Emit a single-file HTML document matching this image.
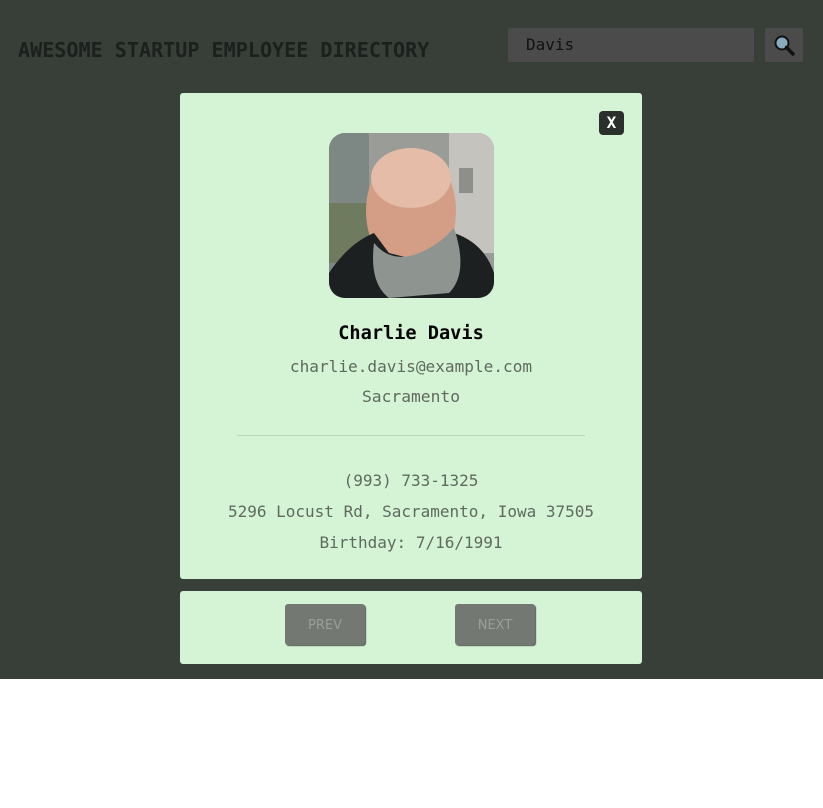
<!DOCTYPE html>
<html><head><style>
body{margin:0;width:823px;height:808px;background:#fff;position:relative;overflow:hidden;font-family:"DejaVu Sans Mono","Liberation Mono",monospace}
.bg{position:absolute;left:0;top:0;width:823px;height:679px;background:#373f38}
.title{position:absolute;left:18px;top:38px;font-size:20.1px;font-weight:bold;color:#1c201d;letter-spacing:0}
.search{position:absolute;left:508px;top:28px;width:246px;height:34px;background:#4b4b4b;border-radius:2px;color:#111;font-size:16px;line-height:34px;box-sizing:border-box;padding-left:18px}
.sbtn{position:absolute;left:765px;top:28px;width:38px;height:34px;background:#4b4b4b;border-radius:2px}
.card{position:absolute;left:180px;top:93px;width:462px;height:486px;background:#d5f4d5;border-radius:3px}
.nav{position:absolute;left:180px;top:591px;width:462px;height:73px;background:#d5f4d5;border-radius:3px}
.x{position:absolute;left:599px;top:111px;width:25px;height:24px;background:#2b302c;border-radius:4px;color:#fff;font-weight:bold;font-size:16px;text-align:center;line-height:24px}
.photo{position:absolute;left:329px;top:133px;width:165px;height:165px;border-radius:16px;overflow:hidden}
.t{position:absolute;left:180px;width:462px;text-align:center;color:#5f6a5f}
.hr{position:absolute;left:237px;top:435px;width:348px;height:1px;background:#bcd3bc}
.b{position:absolute;top:604px;width:80px;height:41px;background:#737873;border-radius:3px;box-shadow:1px 1px 1px #555;color:#999e99;font-family:"DejaVu Sans","Liberation Sans",sans-serif;font-size:13px;text-align:center;line-height:43px}
</style></head><body>
<div class="bg"></div>
<div class="title">AWESOME STARTUP EMPLOYEE DIRECTORY</div>
<div class="search">Davis</div>
<div class="sbtn"><svg width="38" height="34"><circle cx="17" cy="15" r="6.5" fill="#8ab" stroke="#111" stroke-width="2"/><line x1="21.5" y1="19.5" x2="28" y2="26" stroke="#111" stroke-width="3.5" stroke-linecap="round"/></svg></div>
<div class="card"></div>
<div class="x">X</div>
<div class="photo"><svg width="165" height="165" viewBox="0 0 165 165">
<rect width="165" height="165" fill="#9a9c98"/>
<rect x="0" y="0" width="40" height="165" fill="#7d8784"/>
<rect x="120" y="0" width="45" height="120" fill="#c4c3be"/>
<rect x="0" y="70" width="40" height="60" fill="#6f7b5e"/>
<rect x="130" y="35" width="14" height="25" fill="#8e8f8a"/>
<ellipse cx="82" cy="78" rx="45" ry="62" fill="#d49e86"/>
<ellipse cx="82" cy="45" rx="40" ry="30" fill="#e4bca8"/>
<path d="M0 165 L0 140 Q20 110 45 100 L60 120 L100 130 L125 100 Q155 110 165 140 L165 165Z" fill="#1d2021"/>
<path d="M45 110 Q70 140 115 105 L125 95 Q140 140 120 160 L60 165 Q40 150 45 110Z" fill="#8e9590"/>
</svg></div>
<div class="t" style="top:323px;font-size:18.6px;font-weight:bold;color:#000">Charlie Davis</div>
<div class="t" style="top:357px;font-size:16.1px">charlie.davis@example.com</div>
<div class="t" style="top:387px;font-size:16.3px">Sacramento</div>
<div class="hr"></div>
<div class="t" style="top:471px;font-size:16px">(993) 733-1325</div>
<div class="t" style="top:502px;font-size:16px">5296 Locust Rd, Sacramento, Iowa 37505</div>
<div class="t" style="top:533px;font-size:16px">Birthday: 7/16/1991</div>
<div class="nav"></div>
<div class="b" style="left:285px">PREV</div>
<div class="b" style="left:455px">NEXT</div>
</body></html>
